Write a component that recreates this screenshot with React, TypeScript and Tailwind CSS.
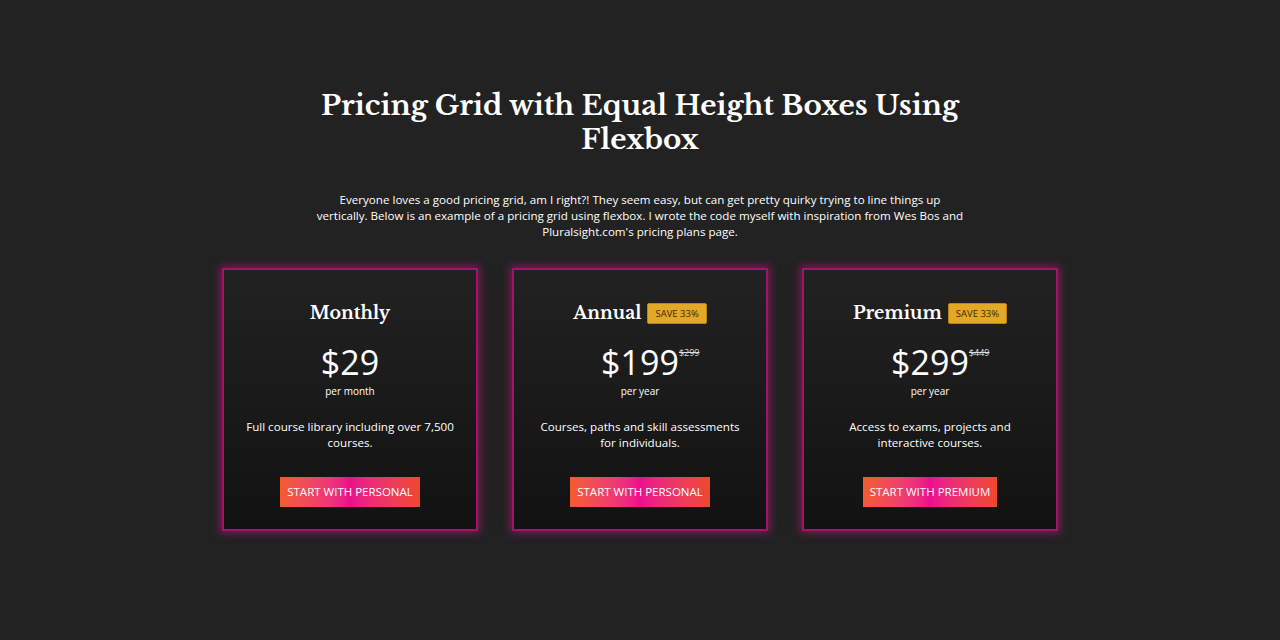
import React from "react";

type Plan = {
  name: string;
  price: string;
  was?: string;
  per: string;
  save?: string;
  desc: string;
  cta: string;
};

const plans: Plan[] = [
  {
    name: "Monthly",
    price: "$29",
    per: "per month",
    desc: "Full course library including over 7,500 courses.",
    cta: "Start with Personal",
  },
  {
    name: "Annual",
    price: "$199",
    was: "$299",
    per: "per year",
    save: "Save 33%",
    desc: "Courses, paths and skill assessments for individuals.",
    cta: "Start with Personal",
  },
  {
    name: "Premium",
    price: "$299",
    was: "$449",
    per: "per year",
    save: "Save 33%",
    desc: "Access to exams, projects and interactive courses.",
    cta: "Start with Premium",
  },
];

const serif = "font-['Libre_Baskerville','DejaVu_Serif',serif]";
const sans = "font-['Open_Sans','Noto_Sans',sans-serif]";

const PlanCard = ({ plan }: { plan: Plan }) => (
  <div className="flex w-[256px] flex-col items-center border-2 border-[#a3136a] bg-gradient-to-b from-[#222222] to-[#121212] px-5 pt-[27px] pb-[22px] shadow-[0_0_8px_2px_rgba(200,20,130,0.55)]">
    <div className="flex h-[32px] items-center gap-[6px]">
      <h2 className={`${serif} text-[17.5px] font-bold text-white`}>{plan.name}</h2>
      {plan.save ? (
        <span
          className={`${sans} rounded-[2px] border border-[#b98414] bg-[#e3a826] px-[7px] py-[4px] text-[9.5px] uppercase leading-[11px] text-[#3a2a08]`}
        >
          {plan.save}
        </span>
      ) : null}
    </div>
    <div className="relative mt-[13px]">
      <span className={`${sans} text-[34px] leading-[40px] text-white`}>{plan.price}</span>
      {plan.was ? (
        <span
          className={`${sans} absolute top-[6px] left-full text-[9px] leading-[10px] text-[#ddd] line-through`}
        >
          {plan.was}
        </span>
      ) : null}
    </div>
    <p className={`${sans} mt-[2px] text-[10px] leading-[14px] text-white`}>{plan.per}</p>
    <p className={`${sans} mt-[21px] w-[212px] text-center text-[11.6px] leading-[16px] text-white`}>
      {plan.desc}
    </p>
    <button
      type="button"
      className={`${sans} mt-[26px] h-[30px] bg-gradient-to-r from-[#f45c2c] via-[#ec0c8c] to-[#f0482c] px-[7px] text-[11.5px] uppercase text-white`}
    >
      {plan.cta}
    </button>
  </div>
);

export default function App() {
  return (
    <div className="flex min-h-[640px] w-full flex-col items-center bg-[#222222] pt-[89px]">
      <h1 className={`${serif} w-[720px] text-center text-[27.8px] font-bold leading-[34px] text-white`}>
        Pricing Grid with Equal Height Boxes Using Flexbox
      </h1>
      <p className={`${sans} mt-[35px] w-[652px] text-center text-[11.6px] leading-[16px] text-white`}>
        Everyone loves a good pricing grid, am I right?! They seem easy, but can get pretty quirky trying to line
        things up vertically. Below is an example of a pricing grid using flexbox. I wrote the code myself with
        inspiration from Wes Bos and Pluralsight.com's pricing plans page.
      </p>
      <div className="mt-[28px] flex gap-[34px]">
        {plans.map((p) => (
          <PlanCard key={p.name} plan={p} />
        ))}
      </div>
    </div>
  );
}
